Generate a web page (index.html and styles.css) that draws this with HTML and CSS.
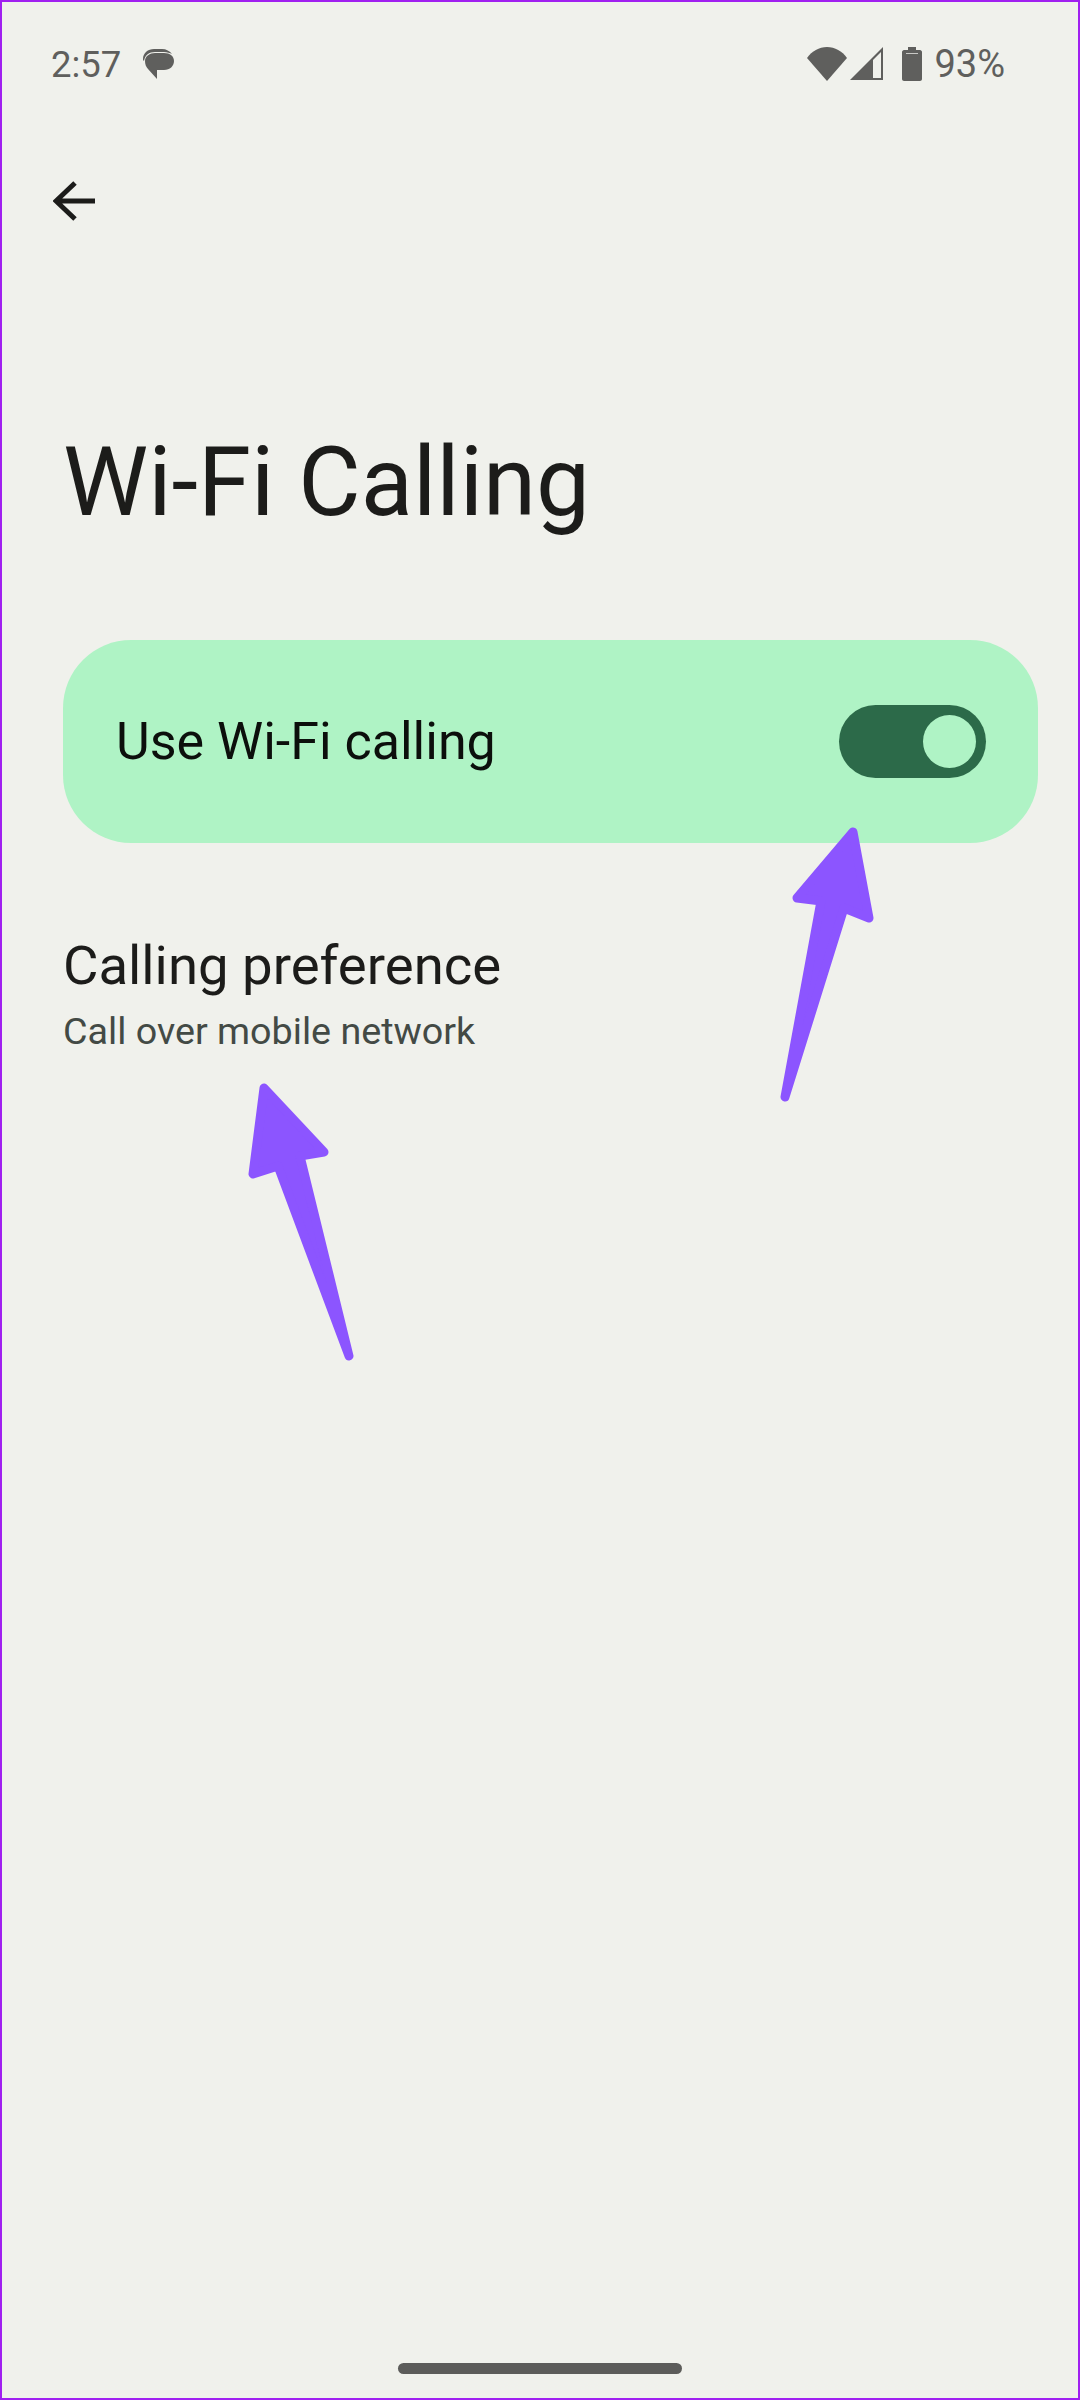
FILE: index.html
```html
<!DOCTYPE html>
<html lang="en">
<head>
    <meta charset="UTF-8">
    <meta name="viewport" content="width=device-width, initial-scale=1.0">
    <title>Wi-Fi Calling</title>
    <link rel="stylesheet" href="styles.css">
</head>
<body>
    <div class="phone">
        <header class="status-bar">
            <div class="status-left">
                <span class="time">2:57</span>
                <svg class="msg-icon" viewBox="0 0 32 32" width="32" height="32">
                    <path d="M1 11C1 5 6 1 12 1h8c4 0 8 2 10 5-2-1-5-2-8-2h-9C7 4 3 7 2 13c-1-1-1-1-1-2z" fill="#5f5f5d"/>
                    <path d="M3 13c0-5 5-8 10-8h9c6 0 10 3 10 8s-4 9-10 9h-7v9L6 21c-2-2-3-5-3-8z" fill="#5f5f5d"/>
                </svg>
            </div>
            <div class="status-right">
                <svg viewBox="0 0 40 34" width="40" height="34">
                    <path d="M0 11C5 4 12 0 20 0s15 4 20 11L20 34z" fill="#5f5f5d"/>
                </svg>
                <svg viewBox="0 0 33 34" width="33" height="34">
                    <path d="M33 0v33H0zM31 5 23 13v18h8z" fill="#5f5f5d" fill-rule="evenodd"/>
                </svg>
                <svg class="battery" viewBox="0 0 20 34" width="20" height="34">
                    <path d="M6 0h8v3h4c1 0 2 1 2 2v27c0 1-1 2-2 2H2c-1 0-2-1-2-2V5c0-1 1-2 2-2h4z" fill="#5f5f5d"/>
                    <rect x="4" y="6" width="12" height="1" fill="#c9c9c6"/>
                </svg>
                <span class="battery-pct">93%</span>
            </div>
        </header>

        <nav class="app-bar">
            <svg viewBox="0 0 42 40" width="42" height="40">
                <path d="M42 20H4M22 2 3 20l19 18" fill="none" stroke="#1c1c1a" stroke-width="5"/>
            </svg>
        </nav>

        <h1 class="page-title">Wi-Fi Calling</h1>

        <section class="main-switch">
            <span class="main-switch-label">Use Wi-Fi calling</span>
            <div class="toggle"><div class="toggle-knob"></div></div>
        </section>

        <section class="pref-item">
            <div class="pref-title">Calling preference</div>
            <div class="pref-summary">Call over mobile network</div>
        </section>

        <div class="nav-pill"></div>

        <!-- annotation arrows drawn over the screenshot -->
        <svg class="arrows" viewBox="0 0 1080 2400" width="1080" height="2400">
            <path class="arrow" d="M853 832 797 898 821 901 785 1097 844 908 869 918z"/>
            <path class="arrow" d="M264 1088 324 1152 300 1156 349 1356 278 1166 253 1174z"/>
        </svg>
    </div>
</body>
</html>
```

FILE: styles.css
```css
/* General Styling */
* {
    box-sizing: border-box;
}

body {
    font-family: Roboto, "Open Sans", Arial, sans-serif;
    margin: 0;
    padding: 0;
}

.phone {
    position: relative;
    width: 1080px;
    height: 2400px;
    background-color: #f0f1ec;
    border: 2px solid #a020f0;
    display: flex;
    flex-direction: column;
    padding: 0 40px 0 61px;
}

/* Status bar */
.status-bar {
    display: flex;
    justify-content: space-between;
    align-items: center;
    height: 124px;
    color: #5f5f5d;
    margin-left: -12px;
    margin-right: 33px;
}

.status-left {
    display: flex;
    align-items: center;
    gap: 21px;
}

.status-right {
    display: flex;
    align-items: center;
    gap: 3px;
}

.time {
    font-size: 36.5px;
}

.battery-pct {
    font-size: 38px;
}

.battery {
    margin-left: 16px;
}

.battery-pct {
    margin-left: 9px;
}

/* App bar */
.app-bar {
    display: flex;
    align-items: center;
    height: 150px;
    margin-left: -10px;
}

.page-title {
    font-size: 96px;
    font-weight: 400;
    color: #1c1c1a;
    margin: 0;
    height: 364px;
    padding-top: 151px;
    line-height: 110px;
}

/* Main switch card */
.main-switch {
    display: flex;
    justify-content: space-between;
    align-items: center;
    height: 203px;
    background-color: #aff3c5;
    border-radius: 68px;
    padding: 0 52px 0 53px;
}

.main-switch-label {
    font-size: 52px;
    color: #0c0f0c;
}

.toggle {
    display: flex;
    justify-content: flex-end;
    align-items: center;
    width: 147px;
    height: 73px;
    padding-right: 10px;
    background-color: #2c6a49;
    border-radius: 37px;
}

.toggle-knob {
    width: 53px;
    height: 53px;
    background-color: #aff3c5;
    border-radius: 50%;
}

/* Preference row */
.pref-item {
    margin-top: 89px;
}

.pref-title {
    font-size: 54.5px;
    line-height: 66px;
    color: #1c1c1a;
}

.pref-summary {
    font-size: 37.7px;
    line-height: 52px;
    color: #434a45;
    margin-top: 7px;
}

.nav-pill {
    position: absolute;
    left: 396px;
    top: 2361px;
    width: 284px;
    height: 11px;
    background-color: #5c5c5a;
    border-radius: 6px;
}

/* Annotation overlay */
.arrows {
    position: absolute;
    left: -2px;
    top: -2px;
}

.arrow {
    fill: #8c55ff;
    stroke: #8c55ff;
    stroke-width: 9;
    stroke-linejoin: round;
}
```
